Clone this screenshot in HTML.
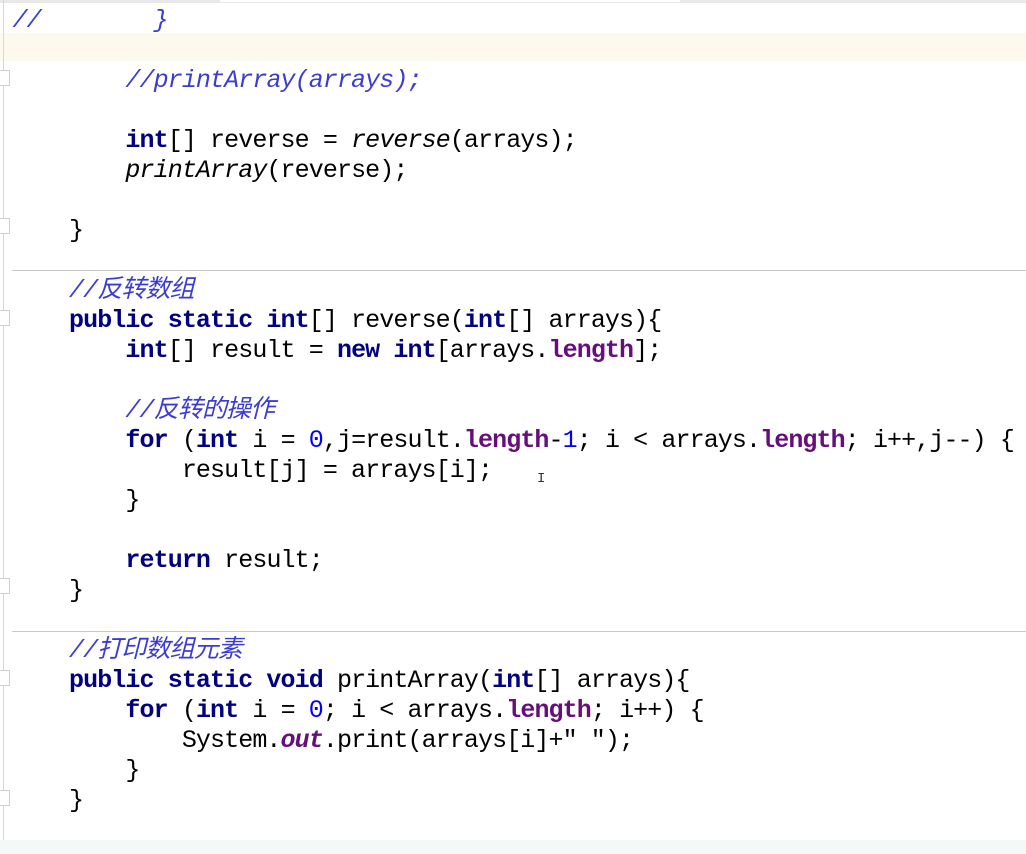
<!DOCTYPE html>
<html><head><meta charset="utf-8"><style>
html,body{margin:0;padding:0;background:#fff;width:1026px;height:854px;overflow:hidden;position:relative}
.code{position:absolute;left:69px;top:36px;font-family:"Liberation Mono","Noto Sans CJK SC",monospace;font-size:25px;letter-spacing:-0.9px;line-height:30px;white-space:pre;color:#000}
.top{position:absolute;left:12.5px;top:6px;font-family:"Liberation Mono",monospace;font-size:25px;letter-spacing:-0.9px;line-height:30px;white-space:pre}
.k{color:#000080;font-weight:bold}
.c{color:#3c3cd0;font-style:italic}
.f{color:#660e7a;font-weight:bold}
.fi{color:#660e7a;font-weight:bold;font-style:italic}
.n{color:#0000ff}
.i{font-style:italic}
.sep{position:absolute;left:12px;right:0;height:1px;background:#c8c8c8}
.fold{position:absolute;left:0;width:9px;height:14px;border:1px solid #d0d0d0;border-left:none;background:#fff}
</style></head><body>
<div style="position:absolute;left:0;top:0;width:1026px;height:3px;background:#e8e8e8"></div>
<div style="position:absolute;left:220px;top:0;width:460px;height:2px;background:#fff"></div>
<div style="position:absolute;left:0;top:33px;width:1026px;height:28px;background:#fdf9ec"></div>
<div style="position:absolute;left:3px;top:0;width:1px;height:854px;background:#d8d8d8"></div>
<div class="fold" style="top:70px"></div>
<div class="fold" style="top:218px"></div>
<div class="fold" style="top:310px"></div>
<div class="fold" style="top:578px"></div>
<div class="fold" style="top:670px"></div>
<div class="fold" style="top:790px"></div>
<div class="sep" style="top:270px"></div>
<div class="sep" style="top:631px"></div>
<div style="position:absolute;left:0;top:840px;width:1026px;height:14px;background:#f6f7f7"></div>
<div style="position:absolute;left:537px;top:471px;width:7px;height:16px;font-family:'Liberation Mono';font-size:14px;color:#333;line-height:16px">I</div>
<div class="top"><span class="c">//        }</span></div>
<div class="code">
    <span class="c">//printArray(arrays);</span>

    <span class="k">int</span>[] reverse = <span class="i">reverse</span>(arrays);
    <span class="i">printArray</span>(reverse);

}

<span class="c">//反转数组</span>
<span class="k">public static int</span>[] reverse(<span class="k">int</span>[] arrays){
    <span class="k">int</span>[] result = <span class="k">new int</span>[arrays.<span class="f">length</span>];

    <span class="c">//反转的操作</span>
    <span class="k">for</span> (<span class="k">int</span> i = <span class="n">0</span>,j=result.<span class="f">length</span>-<span class="n">1</span>; i &lt; arrays.<span class="f">length</span>; i++,j--) {
        result[j] = arrays[i];
    }

    <span class="k">return</span> result;
}

<span class="c">//打印数组元素</span>
<span class="k">public static void</span> printArray(<span class="k">int</span>[] arrays){
    <span class="k">for</span> (<span class="k">int</span> i = <span class="n">0</span>; i &lt; arrays.<span class="f">length</span>; i++) {
        System.<span class="fi">out</span>.print(arrays[i]+" ");
    }
}</div>
</body></html>
